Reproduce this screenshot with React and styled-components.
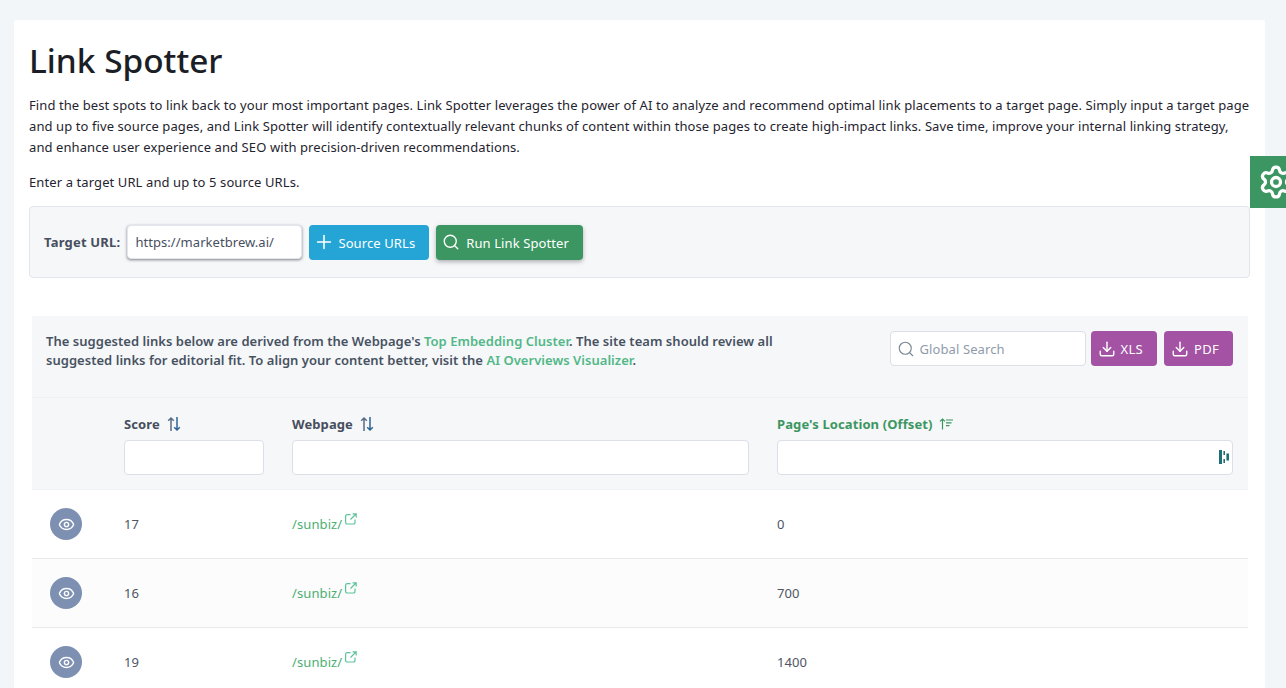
import styled, { createGlobalStyle } from "styled-components";
import { Plus, Search, Download, Eye, Settings } from "lucide-react";

const rows = [
  { score: 17, page: "/sunbiz/", offset: 0 },
  { score: 16, page: "/sunbiz/", offset: 700, striped: true },
  { score: 19, page: "/sunbiz/", offset: 1400 },
];

const SortIcon = () => (
  <svg width="16" height="16" viewBox="0 0 16 16" fill="none" strokeWidth="1.5">
    <path d="M5 15V2M2.2 4.8 5 2l2.8 2.8" stroke="#5b6b85" />
    <path d="M11 1v13M8.2 11.2 11 14l2.8-2.8" stroke="#2f6596" />
  </svg>
);

const SortedIcon = () => (
  <svg width="14" height="12" viewBox="0 0 14 12" fill="none" stroke="#3a9562" strokeWidth="1.2">
    <path d="M3.5 11.5V1M1 3.4 3.5 1 6 3.4" />
    <path d="M7 2h7M7 4.8h5.5M7 7.6h3.5" />
  </svg>
);

const FilterGlyph = () => (
  <svg width="12" height="16" viewBox="0 0 12 16" fill="#1f6f78">
    <rect x="1" y="1" width="3" height="14" />
    <rect x="5.4" y="2" width="1.6" height="4" />
    <rect x="5.4" y="10" width="1.6" height="4" />
    <rect x="8.4" y="4.5" width="2.6" height="7" />
  </svg>
);

const OpenIcon = () => (
  <svg width="12" height="12" viewBox="0 0 12 12" fill="none" stroke="#5cc39a" strokeWidth="1.2">
    <path d="M5.5 1.6H2.2A1.6 1.6 0 0 0 .6 3.2v6.2A1.6 1.6 0 0 0 2.2 11h6.2A1.6 1.6 0 0 0 10 9.4V6.5" />
    <path d="M5.5 6.5 11 1M7.6 .8h3.6v3.6" />
  </svg>
);

const App = () => {
  return (
    <>
      <GlobalStyle />
      <Page>
        <Card>
          <Title>Link Spotter</Title>
          <Intro>
            Find the best spots to link back to your most important pages. Link Spotter leverages the power of AI to
            analyze and recommend optimal link placements to a target page. Simply input a target page and up to five
            source pages, and Link Spotter will identify contextually relevant chunks of content within those pages to
            create high-impact links. Save time, improve your internal linking strategy, and enhance user experience and
            SEO with precision-driven recommendations.
          </Intro>
          <Hint>Enter a target URL and up to 5 source URLs.</Hint>

          <FormPanel>
            <FormLabel>Target URL:</FormLabel>
            <TargetInput defaultValue="https://marketbrew.ai/" />
            <ActionButton $bg="#25a5d5" $gap={3} $left={4}>
              <Plus size={22} strokeWidth={1.7} />
              Source URLs
            </ActionButton>
            <ActionButton $bg="#3c9661" $gap={6} $left={6} $shadow>
              <Search size={18} strokeWidth={1.8} />
              Run Link Spotter
            </ActionButton>
          </FormPanel>

          <TableWrap>
            <Caption>
              <CaptionText>
                The suggested links below are derived from the Webpage's <GreenLink>Top Embedding Cluster</GreenLink>. The
                site team should review all suggested links for editorial fit. To align your content better, visit the{" "}
                <GreenLink>AI Overviews Visualizer</GreenLink>.
              </CaptionText>
              <Tools>
                <SearchBox>
                  <Search size={18} strokeWidth={1.5} color="#7b8794" />
                  <SearchInput placeholder="Global Search" />
                </SearchBox>
                <ExportButton>
                  <Download size={18} strokeWidth={1.9} />
                  XLS
                </ExportButton>
                <ExportButton>
                  <Download size={18} strokeWidth={1.9} />
                  PDF
                </ExportButton>
              </Tools>
            </Caption>

            <HeaderRow>
              <span />
              <HeaderCell>
                <HeaderLabel>
                  Score <SortIcon />
                </HeaderLabel>
                <FilterInput />
              </HeaderCell>
              <HeaderCell>
                <HeaderLabel>
                  Webpage <SortIcon />
                </HeaderLabel>
                <FilterInput />
              </HeaderCell>
              <HeaderCell>
                <HeaderLabel $active>
                  Page's Location (Offset) <SortedIcon />
                </HeaderLabel>
                <FilterWrap>
                  <FilterInput />
                  <GlyphSlot>
                    <FilterGlyph />
                  </GlyphSlot>
                </FilterWrap>
              </HeaderCell>
            </HeaderRow>

            {rows.map((row) => (
              <Row key={row.offset} $striped={row.striped}>
                <EyeButton>
                  <Eye size={17} strokeWidth={2} />
                </EyeButton>
                <span>{row.score}</span>
                <PageCell>
                  <PageLink>{row.page}</PageLink>
                  <OpenIcon />
                </PageCell>
                <span>{row.offset}</span>
              </Row>
            ))}
          </TableWrap>
        </Card>
        <GearTab>
          <Settings size={36} strokeWidth={2.2} />
        </GearTab>
      </Page>
    </>
  );
};

export default App;

const GlobalStyle = createGlobalStyle`
  html, body {
    margin: 0;
    height: 688px;
    overflow: hidden;
    background: #f3f6f9;
  }
  body {
    font-family: "Noto Sans", "Open Sans", sans-serif;
    font-size: 13px;
    letter-spacing: 0.1px;
    color: #1f2430;
  }
`;

const Page = styled.div`
  padding: 20px 21px 0 14px;
  height: 668px;
  overflow: hidden;
`;

const Card = styled.div`
  background: #fff;
  padding: 16px 15px 0 15px;
  min-height: 760px;
  border-radius: 3px;
`;

const Title = styled.h1`
  margin: 0;
  font-size: 33.4px;
  line-height: 48px;
  font-weight: 500;
  letter-spacing: 0;
  color: #1b1e26;
`;

const Intro = styled.p`
  margin: 11px 0 0;
  line-height: 21px;
  letter-spacing: 0.09px;
`;

const Hint = styled.p`
  margin: 14px 0 0;
  line-height: 21px;
`;

const FormPanel = styled.div`
  display: flex;
  align-items: center;
  gap: 7px;
  height: 70px;
  margin-top: 13px;
  padding: 0 14px;
  background: #f6f7f9;
  border: 1px solid #e1e5ec;
  border-radius: 4px;
`;

const FormLabel = styled.label`
  font-weight: 700;
  letter-spacing: 0.2px;
  color: #474e5e;
`;

const TargetInput = styled.input`
  box-sizing: border-box;
  width: 175px;
  height: 34px;
  padding: 0 7px;
  border: 1px solid #e3e5ec;
  border-radius: 4px;
  box-shadow: 0 1px 3px rgba(30, 30, 50, 0.55);
  font: inherit;
  letter-spacing: 0.05px;
  color: #47505f;
  outline: none;
`;

const ActionButton = styled.button`
  display: flex;
  align-items: center;
  gap: ${(p) => p.$gap}px;
  height: 35px;
  padding: 1px 14px 0 ${(p) => p.$left}px;
  border: 0;
  border-radius: 4px;
  background: ${(p) => p.$bg};
  color: #fff;
  font: inherit;
  letter-spacing: inherit;
  box-shadow: ${(p) => (p.$shadow ? "0 2px 4px rgba(40, 50, 60, 0.35)" : "none")};
  svg {
    margin-top: -1px;
  }
`;

const TableWrap = styled.div`
  margin: 38px 2px 0 3px;
`;

const Caption = styled.div`
  display: flex;
  justify-content: space-between;
  height: 82px;
  box-sizing: border-box;
  padding: 16px 15px 0 14px;
  background: #f6f7f9;
  border-bottom: 1px solid #eef0f3;
`;

const CaptionText = styled.p`
  margin: 0;
  width: 745px;
  font-weight: 600;
  line-height: 19px;
  letter-spacing: 0.03px;
  color: #475261;
`;

const GreenLink = styled.a`
  color: #52b788;
  font-weight: 600;
`;

const Tools = styled.div`
  display: flex;
  gap: 7px;
  height: 35px;
  margin-top: -1px;
`;

const SearchBox = styled.div`
  display: flex;
  align-items: center;
  gap: 5px;
  box-sizing: border-box;
  width: 196px;
  margin-right: -2px;
  padding: 0 6px;
  background: #fff;
  border: 1px solid #dcdfe8;
  border-radius: 4px;
`;

const SearchInput = styled.input`
  flex: 1;
  min-width: 0;
  border: 0;
  outline: none;
  padding: 0;
  font: inherit;
  letter-spacing: inherit;
  &::placeholder {
    color: #8f9bab;
  }
`;

const ExportButton = styled.button`
  display: flex;
  align-items: center;
  gap: 5px;
  padding: 0 14px 0 7px;
  border: 0;
  border-radius: 4px;
  background: #a352a4;
  color: #fff;
  font: inherit;
  letter-spacing: 0.3px;
`;

const columns = "92px 168px 485px 1fr";

const HeaderRow = styled.div`
  display: grid;
  grid-template-columns: ${columns};
  height: 92px;
  padding-right: 15px;
  background: #f6f7f9;
  border-bottom: 1px solid #eef0f3;
  box-sizing: border-box;
`;

const HeaderCell = styled.div`
  padding-top: 16px;
  &:nth-child(2) {
    padding-right: 28px;
  }
  &:nth-child(3) {
    padding-right: 28px;
  }
`;

const HeaderLabel = styled.div`
  display: flex;
  align-items: center;
  gap: 6px;
  height: 20px;
  margin-bottom: 6px;
  font-weight: 700;
  color: ${(p) => (p.$active ? "#3c9661" : "#474e5e")};
`;

const FilterWrap = styled.div`
  position: relative;
`;

const FilterInput = styled.input`
  display: block;
  box-sizing: border-box;
  width: 100%;
  height: 35px;
  background: #fff;
  border: 1px solid #dcdfe8;
  border-radius: 4px;
  outline: none;
`;

const GlyphSlot = styled.span`
  position: absolute;
  right: 3px;
  top: 9px;
  line-height: 0;
`;

const Row = styled.div`
  display: grid;
  grid-template-columns: ${columns};
  align-items: center;
  height: 69px;
  box-sizing: border-box;
  padding: 0 15px 0 0;
  background: ${(p) => (p.$striped ? "#fbfcfb" : "#fff")};
  border-bottom: 1px solid #e8eaee;
  color: #4e5563;
`;

const EyeButton = styled.button`
  display: flex;
  align-items: center;
  justify-content: center;
  width: 32px;
  height: 32px;
  margin-left: 18px;
  padding: 0;
  border: 0;
  border-radius: 50%;
  background: #7d90b2;
  color: #fff;
`;

const PageCell = styled.span`
  display: flex;
  align-items: flex-start;
  gap: 3px;
  svg {
    margin-top: -2px;
  }
`;

const PageLink = styled.a`
  color: #4caf72;
`;

const GearTab = styled.div`
  position: fixed;
  top: 156px;
  right: 0;
  display: flex;
  align-items: center;
  width: 36px;
  height: 52px;
  padding-left: 8px;
  box-sizing: border-box;
  overflow: hidden;
  background: #3c9661;
  color: #fff;
  svg {
    flex: none;
  }
`;
